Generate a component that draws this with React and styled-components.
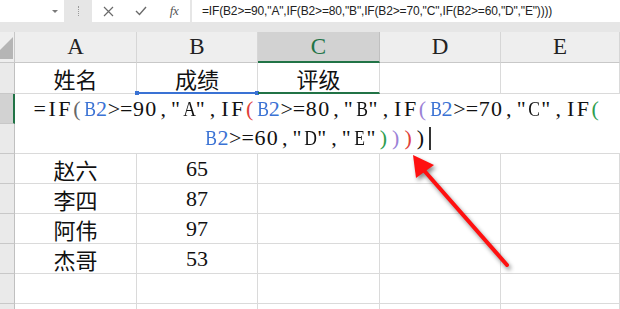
import React from "react";
import styled, { createGlobalStyle } from "styled-components";

const GlobalStyle = createGlobalStyle`
  html, body {
    margin: 0;
    padding: 0;
    background: #ffffff;
    overflow: hidden;
  }
`;

const Page = styled.div`
  position: relative;
  width: 620px;
  height: 309px;
  overflow: hidden;
  background: #ffffff;
  font-family: "Liberation Serif", "Noto Sans CJK SC", serif;
`;

const FormulaBar = styled.div`
  display: flex;
  height: 22px;
  background: #e6e6e6;
`;

const NameBox = styled.div`
  width: 64px;
  background: #ffffff;
  display: flex;
  align-items: center;
  justify-content: flex-end;
  padding-right: 6px;
  box-sizing: border-box;
`;

const DropArrow = styled.span`
  width: 0;
  height: 0;
  border-left: 3px solid transparent;
  border-right: 3px solid transparent;
  border-top: 3px solid #7a7a7a;
`;

const Grip = styled.div`
  width: 28px;
  display: flex;
  align-items: center;
  justify-content: center;

  &::before {
    content: "";
    height: 10px;
    border-left: 1px dotted #9a9a9a;
  }
`;

const ButtonBox = styled.div`
  width: 98px;
  background: #ffffff;
  display: flex;
  align-items: center;
  gap: 11px;
  padding-left: 5px;
  box-sizing: border-box;
  margin-right: 2px;
`;

const IconButton = styled.span`
  width: 22px;
  display: flex;
  align-items: center;
  justify-content: center;
  color: #6a6a6a;
`;

const Fx = styled.span`
  font-family: "Liberation Serif", serif;
  font-style: italic;
  font-size: 13px;
  color: #555555;
  letter-spacing: -0.5px;
`;

const FormulaInput = styled.div`
  flex: 1;
  background: #ffffff;
  display: flex;
  align-items: center;
  padding-left: 10px;
  font-family: "Liberation Sans", Arial, sans-serif;
  font-size: 12px;
  letter-spacing: -0.16px;
  color: #222222;
  white-space: nowrap;
`;

const Band = styled.div`
  height: 10px;
  background: #e6e6e6;
`;

const Sheet = styled.div`
  display: grid;
  grid-template-columns: 15px 122px 121px 122px 121px 1fr;
  grid-template-rows: 31px 31px repeat(9, 30px);
`;

const Corner = styled.div`
  background: #eeeeee;
  border-right: 1px solid #c8c8c8;
  border-bottom: 1px solid #c8c8c8;
  box-sizing: border-box;
  overflow: hidden;
`;

const ColHead = styled.div`
  background: ${(p) => (p.$active ? "#d2d2d2" : "#eeeeee")};
  color: ${(p) => (p.$active ? "#217346" : "#222222")};
  border-right: 1px solid ${(p) => (p.$active ? "#c0c0c0" : "#d6d6d6")};
  border-bottom: ${(p) => (p.$active ? "2px solid #217346" : "1px solid #c8c8c8")};
  box-sizing: border-box;
  display: flex;
  align-items: center;
  justify-content: center;
  font-family: "Liberation Serif", serif;
  font-size: 23px;
`;

const RowHead = styled.div`
  background: ${(p) => (p.$active ? "#d2d2d2" : "#eaeaea")};
  border-right: ${(p) => (p.$active ? "2px solid #217346" : "1px solid #c0c0c0")};
  border-bottom: 1px solid #c8c8c8;
  box-sizing: border-box;
`;

const Cell = styled.div`
  position: relative;
  border-right: 1px solid #dadada;
  border-bottom: ${(p) => (p.$mark ? `2px solid ${p.$mark}` : "1px solid #dadada")};
  box-sizing: border-box;
  display: flex;
  align-items: center;
  justify-content: center;
  font-family: ${(p) =>
    p.$cjk
      ? `"Noto Sans CJK SC", sans-serif`
      : `"Liberation Serif", "Noto Sans CJK SC", serif`};
  font-size: 22px;
  color: #111111;

  ${(p) =>
    p.$handles &&
    `
    &::before, &::after {
      content: "";
      position: absolute;
      bottom: -3px;
      width: 4px;
      height: 4px;
      background: ${p.$mark};
    }
    &::before { left: -2px; }
    &::after { right: -2px; }
  `}
`;

const EditBox = styled.div`
  grid-column: 2 / -1;
  grid-row: 3 / span 2;
  background: #ffffff;
  border-bottom: 1px solid #dadada;
  box-sizing: border-box;
  display: flex;
  flex-direction: column;
  align-items: center;
`;

const EditLine = styled.div`
  height: 30px;
  display: flex;
  align-items: center;
  white-space: nowrap;
`;

/* one half-width cell per character, as the sheet's editor draws them */
const Ch = styled.span`
  display: inline-block;
  width: 12.35px;
  text-align: center;
  font-family: "Liberation Serif", serif;
  font-size: 22px;
  color: ${(p) => p.$color || "#111111"};
  transform: ${(p) => (p.$wide ? "scaleX(0.8)" : "none")};
`;

const Caret = styled.span`
  display: inline-block;
  width: 2px;
  height: 23px;
  margin-left: 2px;
  background: #333333;
`;

const ArrowLayer = styled.svg`
  position: absolute;
  left: 0;
  top: 0;
  pointer-events: none;
  filter: drop-shadow(2px 3px 2px rgba(0, 0, 0, 0.45));
`;

const BLUE = "#3a72d4";
const RED = "#e0403a";
const PURPLE = "#9b82d6";
const GREEN = "#2f9e4f";
const WIDE = "ABCDE";

const line1 = [
  ["=IF"],
  ["(", "#666666"],
  ["B2", BLUE],
  ['>=90,"A",IF'],
  ["(", RED],
  ["B2", BLUE],
  ['>=80,"B",IF'],
  ["(", PURPLE],
  ["B2", BLUE],
  ['>=70,"C",IF'],
  ["(", GREEN],
];

const line2 = [
  ["B2", BLUE],
  ['>=60,"D","E"'],
  [")", GREEN],
  [")", PURPLE],
  [")", RED],
  [")", "#111111"],
];

function FormulaLine({ parts, caret }) {
  return (
    <EditLine>
      {parts.map(([text, color], i) =>
        text.split("").map((c, j) => (
          <Ch key={`${i}-${j}`} $color={color} $wide={WIDE.includes(c)}>
            {c}
          </Ch>
        ))
      )}
      {caret && <Caret />}
    </EditLine>
  );
}

function CloseIcon() {
  return (
    <svg width="11" height="11" viewBox="0 0 11 11">
      <path d="M1 1 L10 10 M10 1 L1 10" stroke="currentColor" strokeWidth="1.2" />
    </svg>
  );
}

function CheckIcon() {
  return (
    <svg width="12" height="10" viewBox="0 0 12 10">
      <path d="M1 5 L4.5 8.5 L11 1" stroke="currentColor" strokeWidth="1.4" fill="none" />
    </svg>
  );
}

const data = [
  ["赵六", "65"],
  ["李四", "87"],
  ["阿伟", "97"],
  ["杰哥", "53"],
  ["", ""],
  ["", ""],
];

export default function App() {
  return (
    <Page>
      <GlobalStyle />
      <FormulaBar>
        <NameBox>
          <DropArrow />
        </NameBox>
        <Grip />
        <ButtonBox>
          <IconButton>
            <CloseIcon />
          </IconButton>
          <IconButton>
            <CheckIcon />
          </IconButton>
          <IconButton>
            <Fx>fx</Fx>
          </IconButton>
        </ButtonBox>
        <FormulaInput>
          =IF(B2&gt;=90,"A",IF(B2&gt;=80,"B",IF(B2&gt;=70,"C",IF(B2&gt;=60,"D","E"))))
        </FormulaInput>
      </FormulaBar>
      <Band />
      <Sheet>
        <Corner>
          <svg width="14" height="30" viewBox="0 0 14 30">
            <polygon points="13,5 13,27 -9,27" fill="#b5b5b5" />
          </svg>
        </Corner>
        <ColHead>A</ColHead>
        <ColHead>B</ColHead>
        <ColHead $active>C</ColHead>
        <ColHead>D</ColHead>
        <ColHead>E</ColHead>

        <RowHead />
        <Cell $cjk>姓名</Cell>
        <Cell $cjk $mark={BLUE} $handles>
          成绩
        </Cell>
        <Cell $cjk $mark="#217346">
          评级
        </Cell>
        <Cell />
        <Cell />

        <RowHead $active />
        <EditBox>
          <FormulaLine parts={line1} />
          <FormulaLine parts={line2} caret />
        </EditBox>
        <RowHead />

        {data.map(([name, score], i) => (
          <React.Fragment key={i}>
            <RowHead />
            <Cell $cjk>{name}</Cell>
            <Cell>{score}</Cell>
            <Cell />
            <Cell />
            <Cell />
          </React.Fragment>
        ))}
      </Sheet>
      <ArrowLayer width="620" height="309" viewBox="0 0 620 309">
        <line x1="507" y1="265" x2="421" y2="167" stroke="#ff1010" strokeWidth="4" strokeLinecap="round" />
        <polygon points="413,155 416,178 434,165" fill="#ff1010" />
      </ArrowLayer>
    </Page>
  );
}
